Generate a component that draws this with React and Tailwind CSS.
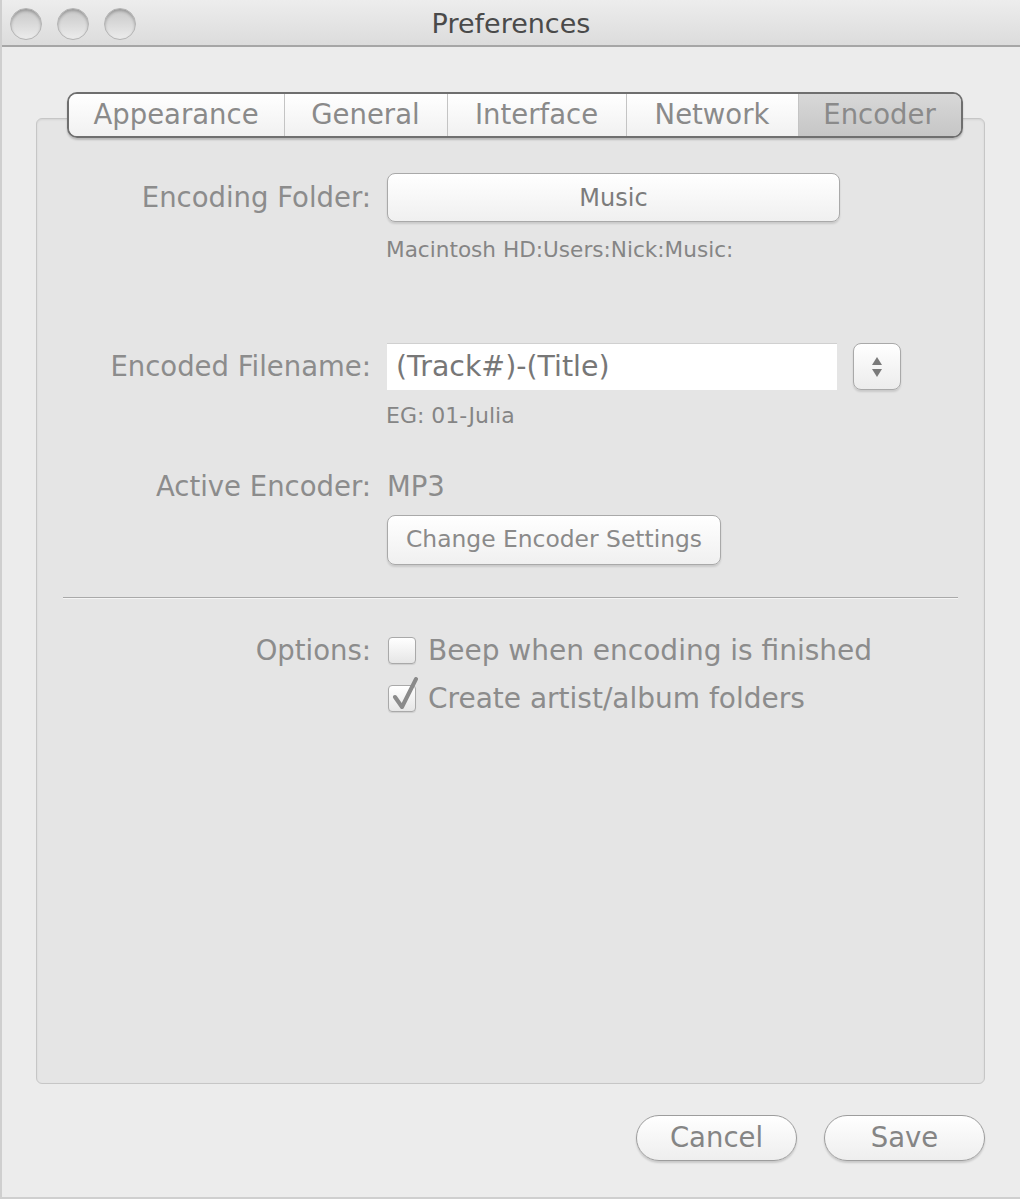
const font = { fontFamily: '"DejaVu Sans", "Liberation Sans", sans-serif' };

function Light() {
  return (
    <div className="w-[32px] h-[32px] rounded-full border border-[#b4b4b4] bg-gradient-to-b from-[#c8c8c8] to-[#ececec] shadow-[inset_0_2px_3px_rgba(0,0,0,0.25)]" />
  );
}

function Tab({ label, width, selected, last }) {
  return (
    <div
      className={
        "h-full flex items-center justify-center text-[27.5px] text-[#8a8a8a] " +
        (last ? "" : "border-r border-[#c4c4c4] ") +
        (selected
          ? "bg-gradient-to-b from-[#d8d8d8] to-[#c6c6c6]"
          : "bg-gradient-to-b from-[#ffffff] to-[#f1f1f1]")
      }
      style={{ width }}
    >
      {label}
    </div>
  );
}

function Label({ children }) {
  return (
    <div className="w-[350px] shrink-0 pr-[16px] text-right text-[27.5px] leading-[41px] text-[#8c8c8c]">
      {children}
    </div>
  );
}

function Checkbox({ checked }) {
  return (
    <div className="relative w-[28px] h-[27px] rounded-[4px] border border-[#a9a9a9] bg-gradient-to-b from-[#ffffff] to-[#e6e6e6] shadow-[0_1px_1px_rgba(0,0,0,0.1)]">
      {checked && (
        <svg className="absolute left-[2px] top-[-9px]" width="28" height="34" viewBox="0 0 28 34">
          <path d="M4 20 L11 30 L25 2" fill="none" stroke="#8a8a8a" strokeWidth="4" strokeLinecap="round" strokeLinejoin="round" />
        </svg>
      )}
    </div>
  );
}

export default function App() {
  return (
    <div className="w-[1020px] h-[1199px] flex flex-col bg-[#ececec] border-l-2 border-b-2 border-[#cfcfcf] overflow-hidden" style={font}>
      {/* title bar */}
      <div className="relative h-[47px] shrink-0 flex items-center bg-gradient-to-b from-[#ededed] to-[#dcdcdc] border-b-2 border-[#a6a6a6]">
        <div className="flex items-center gap-[15px] pl-[8px] pt-[2px]">
          <Light />
          <Light />
          <Light />
        </div>
        <div className="absolute inset-0 flex items-center justify-center pt-[4px] text-[27px] text-[#4a4a4a]">
          Preferences
        </div>
      </div>

      {/* body */}
      <div className="flex-1 flex flex-col pl-[34px] pr-[35px] pt-[45px]">
        <div className="relative z-10 flex justify-center pl-[8px]">
          <div className="flex h-[46px] rounded-[10px] border-2 border-[#6f6f6f] overflow-hidden shadow-[0_2px_2px_rgba(0,0,0,0.2)]">
            <Tab label="Appearance" width={216} />
            <Tab label="General" width={163} />
            <Tab label="Interface" width={179} />
            <Tab label="Network" width={172} />
            <Tab label="Encoder" width={162} selected last />
          </div>
        </div>

        <div className="-mt-[20px] h-[966px] rounded-[6px] border border-[#c6c6c6] bg-[#e5e5e5] shadow-[inset_0_1px_2px_rgba(0,0,0,0.08)] pt-[54px]">
          {/* encoding folder */}
          <div className="flex items-center">
            <Label>Encoding Folder:</Label>
            <div className="w-[453px] h-[49px] rounded-[8px] border border-[#a9a9a9] bg-gradient-to-b from-[#ffffff] to-[#f0f0f0] shadow-[0_2px_2px_rgba(0,0,0,0.12)] flex items-center justify-center text-[24px] text-[#7c7c7c]">
              Music
            </div>
          </div>
          <div className="pl-[349px] mt-[12px] text-[21.6px] leading-[32px] text-[#858585]">Macintosh HD:Users:Nick:Music:</div>

          {/* encoded filename */}
          <div className="flex items-center mt-[77px]">
            <Label>Encoded Filename:</Label>
            <div className="w-[450px] h-[47px] bg-white border-t border-[#d0d0d0] flex items-center pl-[9px] text-[28.4px] text-[#777777]">
              (Track#)-(Title)
            </div>
            <div className="ml-[16px] w-[48px] h-[47px] rounded-[8px] border border-[#a9a9a9] bg-gradient-to-b from-[#ffffff] to-[#ececec] shadow-[0_2px_2px_rgba(0,0,0,0.12)] flex flex-col items-center justify-center gap-[4px]">
              <div className="w-0 h-0 border-l-[5px] border-r-[5px] border-b-[8px] border-l-transparent border-r-transparent border-b-[#7a7a7a]" />
              <div className="w-0 h-0 border-l-[5px] border-r-[5px] border-t-[8px] border-l-transparent border-r-transparent border-t-[#7a7a7a]" />
            </div>
          </div>
          <div className="pl-[349px] mt-[9px] text-[22px] leading-[33px] text-[#858585]">EG: 01-Julia</div>

          {/* active encoder */}
          <div className="flex items-center mt-[34px]">
            <Label>Active Encoder:</Label>
            <div className="text-[27.5px] leading-[41px] text-[#8c8c8c]">MP3</div>
          </div>
          <div className="pl-[350px] mt-[8px]">
            <div className="w-[334px] h-[50px] rounded-[8px] border border-[#a9a9a9] bg-gradient-to-b from-[#ffffff] to-[#f0f0f0] shadow-[0_2px_2px_rgba(0,0,0,0.12)] flex items-center justify-center text-[23.4px] text-[#8a8a8a]">
              Change Encoder Settings
            </div>
          </div>

          <div className="mx-[26px] mt-[32px] h-[2px] bg-[#a9a9a9] border-b border-[#f4f4f4]" />

          {/* options */}
          <div className="flex items-center mt-[31px]">
            <Label>Options:</Label>
            <div className="ml-[1px]"><Checkbox /></div>
            <div className="ml-[12px] text-[28px] leading-[41px] text-[#8c8c8c]">Beep when encoding is finished</div>
          </div>
          <div className="flex items-center mt-[7px]">
            <div className="w-[350px] shrink-0" />
            <div className="ml-[1px]"><Checkbox checked /></div>
            <div className="ml-[12px] text-[28px] leading-[41px] text-[#8c8c8c]">Create artist/album folders</div>
          </div>
        </div>

        {/* bottom buttons */}
        <div className="flex justify-end gap-[27px] mt-[31px]">
          <div className="w-[161px] h-[46px] rounded-full border border-[#9d9d9d] bg-gradient-to-b from-[#ffffff] to-[#eeeeee] shadow-[0_2px_2px_rgba(0,0,0,0.15)] flex items-center justify-center text-[27.5px] text-[#858585]">
            Cancel
          </div>
          <div className="w-[161px] h-[46px] rounded-full border border-[#9d9d9d] bg-gradient-to-b from-[#ffffff] to-[#eeeeee] shadow-[0_2px_2px_rgba(0,0,0,0.15)] flex items-center justify-center text-[27.5px] text-[#858585]">
            Save
          </div>
        </div>
      </div>
    </div>
  );
}
